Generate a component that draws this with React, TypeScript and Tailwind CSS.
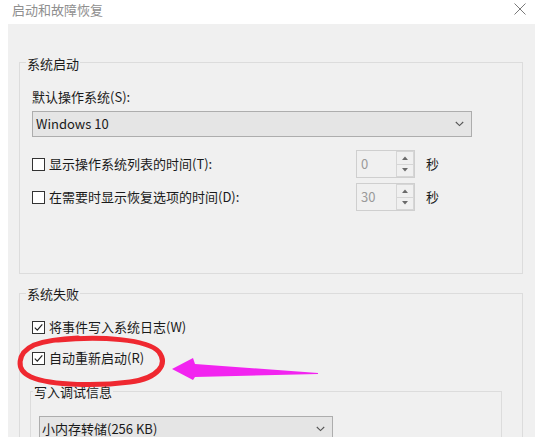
import React from "react";

function CheckBox({ checked }: { checked?: boolean }) {
  return (
    <span className="flex h-[13px] w-[13px] shrink-0 items-center justify-center border border-[#333333] bg-white">
      {checked && (
        <svg width="11" height="11" viewBox="0 0 11 11">
          <path d="M1.8 5.6 L4.3 8.1 L9.3 2.4" fill="none" stroke="#222" strokeWidth="1.2" />
        </svg>
      )}
    </span>
  );
}

function Chevron() {
  return (
    <svg width="9" height="6" viewBox="0 0 9 6">
      <path d="M0.8 1 L4.5 4.6 L8.2 1" fill="none" stroke="#555" strokeWidth="1.1" />
    </svg>
  );
}

function Spin({ value }: { value: string }) {
  return (
    <div className="flex h-[28px] w-[59px] border border-[#cfcfcf] bg-[#f0f0f0]">
      <div className="flex flex-1 items-center pl-[4px] text-[#9a9a9a] leading-[18px]">{value}</div>
      <div className="flex w-[18px] flex-col">
        <div className="flex flex-1 items-center justify-center border border-[#d6d6d6] bg-[#f0f0f0]">
          <svg width="6" height="4" viewBox="0 0 6 4">
            <path d="M0 4 L3 0.5 L6 4 Z" fill="#6a6a6a" />
          </svg>
        </div>
        <div className="flex flex-1 items-center justify-center border border-t-0 border-[#d6d6d6] bg-[#f0f0f0]">
          <svg width="6" height="4" viewBox="0 0 6 4">
            <path d="M0 0 L3 3.5 L6 0 Z" fill="#6a6a6a" />
          </svg>
        </div>
      </div>
    </div>
  );
}

function SpinRow({ label, value }: { label: string; value: string }) {
  return (
    <div className="flex h-[28px] items-center">
      <div className="flex w-[324px] items-center gap-[4px]">
        <CheckBox />
        <span className="leading-[18px]">{label}</span>
      </div>
      <Spin value={value} />
      <span className="ml-[11px] leading-[18px]">秒</span>
    </div>
  );
}

export default function App() {
  return (
    <div className="relative h-[437px] w-[535px] overflow-hidden bg-white font-['Noto_Sans_CJK_SC',sans-serif] text-[13px] text-[#1a1a1a]">
      {/* title bar */}
      <div className="flex h-[24px] items-start justify-between pl-[12px] pr-[9px]">
        <span className="leading-[20px] text-[#8f8f8f]">启动和故障恢复</span>
        <svg width="12" height="12" viewBox="0 0 12 12" className="mt-[3px]">
          <path d="M0.5 0.5 L11.5 11.5 M11.5 0.5 L0.5 11.5" stroke="#7a7a7a" strokeWidth="1" />
        </svg>
      </div>

      {/* body */}
      <div className="ml-[8px] h-[413px] bg-[#f0f0f0] pl-[11px] pr-[12px] pt-[38px]">
        {/* 系统启动 */}
        <div className="h-[212px] border border-[#dcdcdc]">
          <div className="-mt-[8px] ml-[6px] w-fit bg-[#f0f0f0] px-[1px] leading-[18px]">系统启动</div>
          <div className="pl-[12px]">
            <div className="mt-[15px] leading-[18px]">默认操作系统(S):</div>
            <div className="mt-[5px] flex h-[26px] w-[440px] items-center justify-between border border-[#adadad] bg-[#e5e5e5] pl-[3px] pr-[7px]">
              <span className="leading-[18px]">Windows 10</span>
              <Chevron />
            </div>
            <div className="mt-[13px] flex flex-col gap-[5px]">
              <SpinRow label="显示操作系统列表的时间(T):" value="0" />
              <SpinRow label="在需要时显示恢复选项的时间(D):" value="30" />
            </div>
          </div>
        </div>

        {/* 系统失败 */}
        <div className="mt-[19px] h-[170px] border border-[#dcdcdc]">
          <div className="-mt-[9px] ml-[6px] w-fit bg-[#f0f0f0] px-[1px] leading-[18px]">系统失败</div>
          <div className="pl-[10px]">
            <div className="ml-[2px] mt-[15px] flex h-[18px] items-center gap-[4px]">
              <CheckBox checked />
              <span className="leading-[18px]">将事件写入系统日志(W)</span>
            </div>
            <div className="ml-[2px] mt-[13px] flex h-[18px] items-center gap-[4px]">
              <CheckBox checked />
              <span className="leading-[18px]">自动重新启动(R)</span>
            </div>
            {/* 写入调试信息 */}
            <div className="mt-[24px] h-[80px] w-[472px] border border-[#dcdcdc]">
              <div className="-mt-[9px] ml-[2px] w-fit bg-[#f0f0f0] px-[1px] leading-[18px]">写入调试信息</div>
              <div className="ml-[8px] mt-[15px] flex h-[26px] w-[294px] items-center justify-between border border-[#adadad] bg-[#e5e5e5] pl-[2px] pr-[7px]">
                <span className="leading-[18px]">小内存转储(256 KB)</span>
                <Chevron />
              </div>
            </div>
          </div>
        </div>
      </div>

      {/* annotations drawn over the dialog */}
      <svg
        className="pointer-events-none absolute left-0 top-0"
        width="535"
        height="437"
        viewBox="0 0 535 437"
      >
        <path
          d="M58 340 C100 336, 148 339, 159 352 C168 364, 159 378, 130 382 C100 386, 52 386, 31 377 C15 370, 17 353, 34 345 C45 341, 56 339, 78 338"
          fill="none"
          stroke="#ef2830"
          strokeWidth="5"
          strokeLinecap="round"
        />
        <path
          d="M172 369 L193 358 L195 364 L318 373 L318 374 L195 377 L193 380 Z"
          fill="#f224f0"
        />
      </svg>
    </div>
  );
}
